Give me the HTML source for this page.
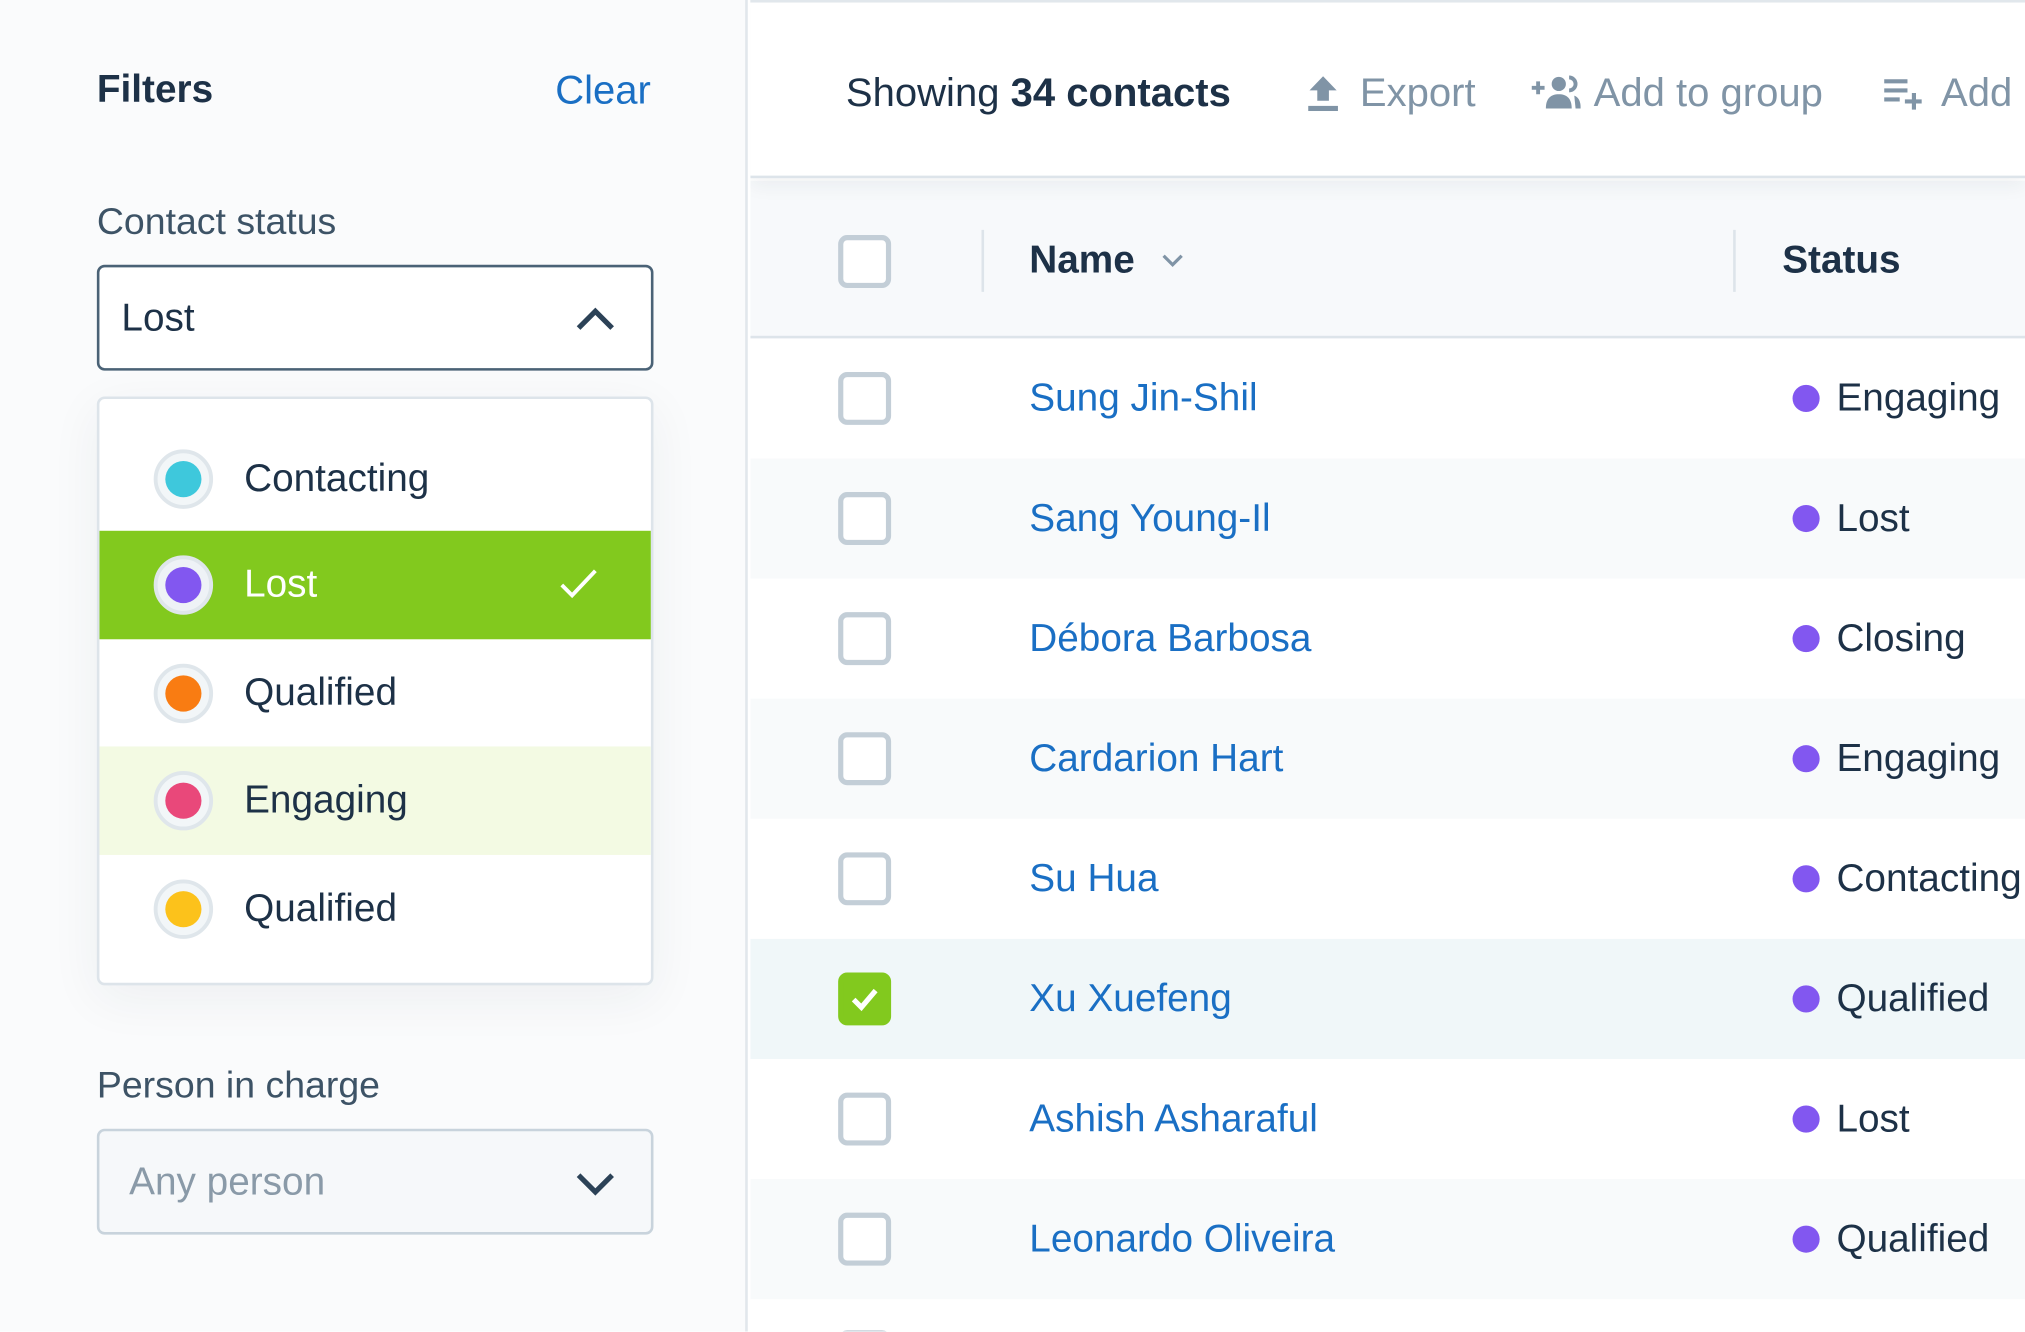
<!DOCTYPE html>
<html><head><meta charset="utf-8"><style>
*{box-sizing:border-box;margin:0;padding:0}
html,body{width:2025px;height:1332px;overflow:hidden;background:#fff}
#wrap{position:relative;width:2025px;height:1332px;overflow:hidden}
#s{position:absolute;left:0;top:0;width:1568px;height:1031px;transform:scale(1.29145);transform-origin:0 0;font-family:"Liberation Sans",sans-serif;color:#1d3147;overflow:hidden}
.a{position:absolute;white-space:nowrap}
.t{font-size:29px;line-height:40px;transform:translateY(-20px)}
#left{position:absolute;left:0;top:0;width:579px;height:1031px;background:#fafbfc;border-right:2px solid #e1e7ec}
.sel{position:absolute;left:75px;width:431px;height:82px;border-radius:6px}
.dd{position:absolute;left:75px;top:307px;width:431px;height:456px;background:#fff;border:2px solid #dde4ea;border-radius:6px;box-shadow:0 10px 40px rgba(30,50,70,.06);overflow:hidden}
.it{position:absolute;left:0;width:427px;height:84px}
.it .c{position:absolute;left:42px;top:19px;width:46px;height:46px;border-radius:50%;background:#f2f6f8;border:3px solid #dfe6eb}
.it .c i{position:absolute;left:6px;top:6px;width:28px;height:28px;border-radius:50%}
.it span{position:absolute;left:112px;top:22px;font-size:30px;line-height:40px}
#right{position:absolute;left:581px;top:0;width:987px;height:1031px;background:#fff;border-top:2px solid #e1e7ec;overflow:hidden}
.row{position:absolute;left:0;width:987px;height:93px}
.cb{position:absolute;left:68px;width:41px;height:41px;border:4px solid #c3ced7;border-radius:7px;background:#fff}
.nm{position:absolute;left:216px;font-size:30px;line-height:40px;color:#1a6fc4}
.dot{position:absolute;left:807px;width:21px;height:21px;border-radius:50%;background:#8257f0}
.st{position:absolute;left:841px;font-size:30px;line-height:40px;color:#1d3147}
.gray{color:#8094a6}
</style></head><body><div id="wrap"><div id="s">
<div id="left">
 <div class="a t" style="left:75px;top:70px;font-weight:bold;font-size:30px">Filters</div>
 <div class="a t" style="right:73px;top:70px;font-size:31px;color:#1a6fc4">Clear</div>
 <div class="a t" style="left:75px;top:172px;color:#3d5366">Contact status</div>
 <div class="sel" style="top:205px;background:#fff;border:2px solid #4a6276">
  <div class="a" style="left:17px;top:20px;font-size:30px;line-height:40px">Lost</div>
  <svg class="a" style="left:368px;top:28px" width="32" height="24" viewBox="0 0 32 24"><path d="M3 19 L16 6 L29 19" fill="none" stroke="#2c4257" stroke-width="4"/></svg>
 </div>
 <div class="dd">
  <div class="it" style="top:20px"><div class="c"><i style="background:#3ec8dc"></i></div><span>Contacting</span></div>
  <div class="it" style="top:102px;background:#82c91e"><div class="c" style="background:#eef2f6"><i style="background:#8257f0"></i></div><span style="color:#fff">Lost</span>
   <svg class="a" style="left:356px;top:28px" width="30" height="26" viewBox="0 0 30 26"><path d="M2 14 L10 22 L28 3" fill="none" stroke="#fff" stroke-width="3"/></svg></div>
  <div class="it" style="top:186px"><div class="c"><i style="background:#f97c12"></i></div><span>Qualified</span></div>
  <div class="it" style="top:269px;background:#f3fae3"><div class="c"><i style="background:#e9487a"></i></div><span>Engaging</span></div>
  <div class="it" style="top:353px"><div class="c"><i style="background:#fcc21b"></i></div><span>Qualified</span></div>
 </div>
 <div class="a t" style="left:75px;top:841px;color:#3d5366">Person in charge</div>
 <div class="sel" style="top:874px;background:#f6f8fa;border:2px solid #c8d3dc">
  <div class="a" style="left:23px;top:20px;font-size:30px;line-height:40px;color:#8a9aa8">Any person</div>
  <svg class="a" style="left:368px;top:30px" width="32" height="22" viewBox="0 0 32 22"><path d="M3 4 L16 17 L29 4" fill="none" stroke="#2c4257" stroke-width="4"/></svg>
 </div>
</div>
<div id="right">
 <div class="a" style="left:0;top:0;width:987px;height:136px;border-bottom:2px solid #dde4ea;box-shadow:0 6px 14px rgba(30,50,70,.06);background:#fff;z-index:2"></div>
 <div class="a t" style="left:74px;top:70px;font-size:31px;z-index:3">Showing <b>34 contacts</b></div>
 <svg class="a" style="left:431px;top:56px;z-index:3" width="25" height="28" viewBox="0 0 25 28"><path d="M12.5 1 L23 12 L17 12 L17 20 L8 20 L8 12 L2 12 Z" fill="#8094a6"/><rect x="1" y="24" width="23" height="4" fill="#8094a6"/></svg>
 <div class="a t gray" style="left:472px;top:70px;font-size:31px;z-index:3">Export</div>
 <svg class="a" style="left:605px;top:56px;z-index:3" width="38" height="26" viewBox="0 0 38 26"><path d="M0 10h10M5 5v10" stroke="#8094a6" stroke-width="3"/><circle cx="21" cy="7" r="5.5" fill="#8094a6"/><path d="M29 2a5 5 0 0 1 0 10" stroke="#8094a6" stroke-width="3" fill="none"/><path d="M11 26c0-8 4-11 10-11s10 3 10 11z" fill="#8094a6"/><path d="M33 16c3 1 5 4 5 10h-4" fill="#8094a6"/></svg>
 <div class="a t gray" style="left:653px;top:70px;font-size:31px;z-index:3">Add to group</div>
 <svg class="a" style="left:877px;top:59px;z-index:3" width="34" height="24" viewBox="0 0 34 24"><path d="M1 2h18M1 9h18M1 16h12M24 11v13M17 17.5h13" stroke="#8094a6" stroke-width="3.2"/></svg>
 <div class="a t gray" style="left:922px;top:70px;font-size:31px;z-index:3">Add</div>

 <div class="a" style="left:0;top:138px;width:987px;height:122px;background:#f7f9fb;border-bottom:2px solid #dde4ea"></div>
 <div class="cb" style="top:180px;background:#fff"></div>
 <div class="a" style="left:179px;top:176px;width:2px;height:48px;background:#dde4ea"></div>
 <div class="a t" style="left:216px;top:200px;font-weight:bold;font-size:30px">Name</div>
 <svg class="a" style="left:318px;top:194px" width="18" height="12" viewBox="0 0 18 12"><path d="M2 2 L9 9 L16 2" fill="none" stroke="#8094a6" stroke-width="2.5"/></svg>
 <div class="a" style="left:761px;top:176px;width:2px;height:48px;background:#dde4ea"></div>
 <div class="a t" style="left:799px;top:200px;font-weight:bold;font-size:30px">Status</div>

 <div class="row" style="top:260px"><div class="cb" style="top:26px"></div><div class="nm" style="top:27px">Sung Jin-Shil</div><div class="dot" style="top:36px"></div><div class="st" style="top:27px">Engaging</div></div>
 <div class="row" style="top:353px;background:#f8fafb"><div class="cb" style="top:26px"></div><div class="nm" style="top:27px">Sang Young-Il</div><div class="dot" style="top:36px"></div><div class="st" style="top:27px">Lost</div></div>
 <div class="row" style="top:446px"><div class="cb" style="top:26px"></div><div class="nm" style="top:27px">Débora Barbosa</div><div class="dot" style="top:36px"></div><div class="st" style="top:27px">Closing</div></div>
 <div class="row" style="top:539px;background:#f8fafb"><div class="cb" style="top:26px"></div><div class="nm" style="top:27px">Cardarion Hart</div><div class="dot" style="top:36px"></div><div class="st" style="top:27px">Engaging</div></div>
 <div class="row" style="top:632px"><div class="cb" style="top:26px"></div><div class="nm" style="top:27px">Su Hua</div><div class="dot" style="top:36px"></div><div class="st" style="top:27px">Contacting</div></div>
 <div class="row" style="top:725px;background:#f0f7f9"><div class="cb" style="top:26px;background:#82c91e;border-color:#82c91e"><svg style="position:absolute;left:5px;top:7px" width="24" height="20" viewBox="0 0 24 20"><path d="M3 10 L9 16 L20 3" fill="none" stroke="#fff" stroke-width="4"/></svg></div><div class="nm" style="top:27px">Xu Xuefeng</div><div class="dot" style="top:36px"></div><div class="st" style="top:27px">Qualified</div></div>
 <div class="row" style="top:818px"><div class="cb" style="top:26px"></div><div class="nm" style="top:27px">Ashish Asharaful</div><div class="dot" style="top:36px"></div><div class="st" style="top:27px">Lost</div></div>
 <div class="row" style="top:911px;background:#f8fafb"><div class="cb" style="top:26px"></div><div class="nm" style="top:27px">Leonardo Oliveira</div><div class="dot" style="top:36px"></div><div class="st" style="top:27px">Qualified</div></div>
 <div class="row" style="top:1004px;height:27px;overflow:hidden"><div class="cb" style="top:24px"></div></div>
</div>
</div></div></body></html>
